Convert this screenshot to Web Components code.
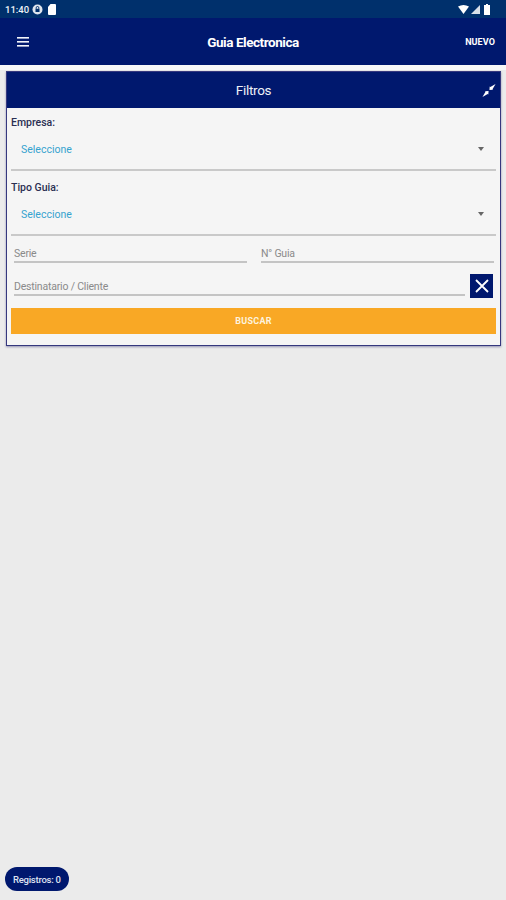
<!DOCTYPE html>
<html lang="es">
<head>
<meta charset="utf-8">
<title>Guia Electronica</title>
<style>
  html, body { margin: 0; height: 100%; }
  body {
    width: 506px;
    height: 900px;
    overflow: hidden;
    background: #ebebeb;
    font-family: Roboto, "Liberation Sans", sans-serif;
    display: flex;
    flex-direction: column;
  }
</style>
</head>
<body>
<guia-status-bar></guia-status-bar>
<guia-toolbar titulo="Guia Electronica" accion="NUEVO"></guia-toolbar>
<guia-filtros titulo="Filtros">
  <guia-select etiqueta="Empresa:" valor="Seleccione"></guia-select>
  <guia-select etiqueta="Tipo Guia:" valor="Seleccione" style="margin-top:10px"></guia-select>
  <guia-fila style="margin-top:8px">
    <guia-input placeholder="Serie"></guia-input>
    <guia-input placeholder="N° Guia"></guia-input>
  </guia-fila>
  <guia-destinatario placeholder="Destinatario / Cliente"></guia-destinatario>
  <guia-boton>BUSCAR</guia-boton>
</guia-filtros>
<guia-registros total="0"></guia-registros>

<script>
class GuiaStatusBar extends HTMLElement {
  constructor() {
    super();
    this.attachShadow({ mode: "open" });
    this.shadowRoot.innerHTML = `
      <style>
        :host {
          display: flex;
          align-items: center;
          justify-content: space-between;
          height: 18px;
          padding: 0 16px 0 5px;
          background: #00306c;
          color: #eef2f7;
          font: 500 9.5px Roboto, sans-serif;
        }
        .lado { display: flex; align-items: center; gap: 3px; }
        svg { display: block; }
      </style>
      <div class="lado">
        <span>11:40</span>
        <svg width="11" height="11" viewBox="0 0 11 11">
          <circle cx="5.5" cy="5.5" r="5" fill="#dfe6ee"/>
          <rect x="3.5" y="4.8" width="4" height="3.2" fill="#00306c"/>
          <path d="M4.2 4.8V3.8a1.3 1.3 0 0 1 2.6 0v1" fill="none" stroke="#00306c"/>
        </svg>
        <svg width="8" height="11" viewBox="0 0 8 11" style="margin-left:2px">
          <path d="M2.5 0H7a1 1 0 0 1 1 1v9a1 1 0 0 1-1 1H1a1 1 0 0 1-1-1V3z" fill="#fff"/>
        </svg>
      </div>
      <div class="lado" style="gap:2px">
        <svg width="11" height="9" viewBox="0 0 11 9"><path d="M0 1.5Q5.5-1.5 11 1.5L5.5 9z" fill="#fff"/></svg>
        <svg width="9" height="9" viewBox="0 0 9 9"><path d="M9 0V9H0z" fill="#fff" opacity=".85"/></svg>
        <svg width="6" height="11" viewBox="0 0 6 11" style="margin-left:2px"><path d="M2 0H4V1H6V11H0V1H2z" fill="#fff"/></svg>
      </div>`;
  }
}

class GuiaToolbar extends HTMLElement {
  constructor() {
    super();
    this.attachShadow({ mode: "open" });
    this.shadowRoot.innerHTML = `
      <style>
        :host {
          display: grid;
          grid-template-columns: 1fr auto 1fr;
          align-items: center;
          height: 47px;
          border-bottom: 5px solid #f8f8f8;
          background: #00186e;
          color: #fff;
          font-family: Roboto, sans-serif;
        }
        .menu { padding-left: 17px; display: flex; }
        .titulo { font-size: 13.5px; font-weight: 700; letter-spacing: -.45px; }
        .accion { justify-self: end; padding-right: 11px; font-size: 9px; font-weight: 700; letter-spacing: .1px; }
      </style>
      <div class="menu">
        <svg width="12" height="10" viewBox="0 0 12 10" fill="#f2f4fa">
          <rect y="0" width="12" height="1.6"/>
          <rect y="4" width="12" height="1.6"/>
          <rect y="8" width="12" height="1.6"/>
        </svg>
      </div>
      <div class="titulo"></div>
      <div class="accion"></div>`;
    this.shadowRoot.querySelector(".titulo").textContent = this.getAttribute("titulo");
    this.shadowRoot.querySelector(".accion").textContent = this.getAttribute("accion");
  }
}

class GuiaFiltros extends HTMLElement {
  constructor() {
    super();
    this.attachShadow({ mode: "open" });
    this.shadowRoot.innerHTML = `
      <style>
        :host {
          display: block;
          margin: 1px 5px 0 6px;
          border: 1px solid #35387e;
          background: #f5f5f5;
          box-shadow: 0 1px 2px rgba(40, 40, 110, .45);
          font-family: Roboto, sans-serif;
        }
        header {
          display: grid;
          grid-template-columns: 40px 1fr 40px;
          align-items: center;
          height: 36px;
          background: #00186e;
          color: #eef0f6;
          font-size: 13.5px;
          letter-spacing: -.3px;
          text-align: center;
        }
        header svg { justify-self: end; margin-right: 4px; }
        .cuerpo { padding: 8px 4px 11px; display: flex; flex-direction: column; }
      </style>
      <header>
        <span></span>
        <span class="titulo"></span>
        <svg width="14" height="15" viewBox="0 0 16 16" fill="#fff">
          <path d="M15.5 .5 9.5 4 8.8 3.4 8.5 7.5 12.6 7.2 12 6.5z"/>
          <path d="M.5 15.5 6.5 12 7.2 12.6 7.5 8.5 3.4 8.8 4 9.5z"/>
        </svg>
      </header>
      <div class="cuerpo"><slot></slot></div>`;
    this.shadowRoot.querySelector(".titulo").textContent = this.getAttribute("titulo");
  }
}

class GuiaSelect extends HTMLElement {
  constructor() {
    super();
    this.attachShadow({ mode: "open" });
    this.shadowRoot.innerHTML = `
      <style>
        :host { display: block; font-family: Roboto, sans-serif; }
        label { display: block; height: 13px; line-height: 13px; font-size: 10.5px; font-weight: 500; color: #2b2f52; }
        .caja {
          display: flex;
          align-items: center;
          justify-content: space-between;
          height: 40px;
          padding: 0 12px 0 10px;
          border-bottom: 2px solid #c9c9c9;
          color: #35a3cf;
          font-size: 10.5px;
        }
        .flecha { width: 0; height: 0; border: 3px solid transparent; border-top: 4px solid #666; border-bottom: 0; }
      </style>
      <label></label>
      <div class="caja"><span class="valor"></span><span class="flecha"></span></div>`;
    this.shadowRoot.querySelector("label").textContent = this.getAttribute("etiqueta");
    this.shadowRoot.querySelector(".valor").textContent = this.getAttribute("valor");
  }
}

class GuiaFila extends HTMLElement {
  constructor() {
    super();
    this.attachShadow({ mode: "open" });
    this.shadowRoot.innerHTML = `
      <style>
        :host { display: grid; grid-template-columns: 233px 233px; justify-content: space-between; padding: 0 2px 0 3px; }
      </style>
      <slot></slot>`;
  }
}

class GuiaInput extends HTMLElement {
  constructor() {
    super();
    this.attachShadow({ mode: "open" });
    this.shadowRoot.innerHTML = `
      <style>
        :host { display: block; font-family: Roboto, sans-serif; }
        input {
          display: block;
          box-sizing: border-box;
          width: 100%;
          height: 19px;
          padding: 1px 0 0;
          border: 0;
          border-bottom: 2px solid #c4c4c4;
          background: transparent;
          font: 10.5px Roboto, sans-serif;
          letter-spacing: -.2px;
          outline: none;
        }
        input::placeholder { color: #8a8a8a; opacity: 1; }
      </style>
      <input type="text">`;
  }

  static get observedAttributes() {
    return ["placeholder"];
  }

  attributeChangedCallback(name, oldValue, newValue) {
    if (name === "placeholder") {
      this.shadowRoot.querySelector("input").placeholder = newValue || "";
    }
  }
}

class GuiaDestinatario extends HTMLElement {
  constructor() {
    super();
    this.attachShadow({ mode: "open" });
    this.shadowRoot.innerHTML = `
      <style>
        :host { display: flex; align-items: flex-end; gap: 5px; margin-top: 11px; padding: 0 3px 0 3px; }
        guia-input { flex: 1; margin-bottom: 2px; }
        button {
          display: flex;
          align-items: center;
          justify-content: center;
          width: 23px;
          height: 24px;
          padding: 0;
          border: 0;
          background: #00186e;
        }
      </style>
      <guia-input></guia-input>
      <button type="button">
        <svg width="14" height="14" viewBox="0 0 14 14" stroke="#fff" stroke-width="1.8" fill="none">
          <path d="M1 1 13 13M13 1 1 13"/>
        </svg>
      </button>`;
    this.shadowRoot.querySelector("guia-input").setAttribute("placeholder", this.getAttribute("placeholder"));
  }
}

class GuiaBoton extends HTMLElement {
  constructor() {
    super();
    this.attachShadow({ mode: "open" });
    this.shadowRoot.innerHTML = `
      <style>
        :host {
          display: flex;
          align-items: center;
          justify-content: center;
          height: 26px;
          margin-top: 10px;
          background: #f9a825;
          color: #fdf3df;
          font: 700 9px Roboto, sans-serif;
          letter-spacing: .3px;
        }
      </style>
      <slot></slot>`;
  }
}

class GuiaRegistros extends HTMLElement {
  constructor() {
    super();
    this.attachShadow({ mode: "open" });
    this.shadowRoot.innerHTML = `
      <style>
        :host {
          display: flex;
          align-items: center;
          align-self: flex-start;
          height: 24px;
          margin: auto 0 9px 5px;
          padding: 0 8px;
          border-radius: 12px;
          background: #00186e;
          color: #dfe3f2;
          font: 500 9.5px Roboto, sans-serif;
          letter-spacing: -.25px;
        }
      </style>
      <span></span>`;
    this.shadowRoot.querySelector("span").textContent = "Registros: " + this.getAttribute("total");
  }
}

customElements.define("guia-status-bar", GuiaStatusBar);
customElements.define("guia-toolbar", GuiaToolbar);
customElements.define("guia-filtros", GuiaFiltros);
customElements.define("guia-select", GuiaSelect);
customElements.define("guia-fila", GuiaFila);
customElements.define("guia-input", GuiaInput);
customElements.define("guia-destinatario", GuiaDestinatario);
customElements.define("guia-boton", GuiaBoton);
customElements.define("guia-registros", GuiaRegistros);
</script>
</body>
</html>
